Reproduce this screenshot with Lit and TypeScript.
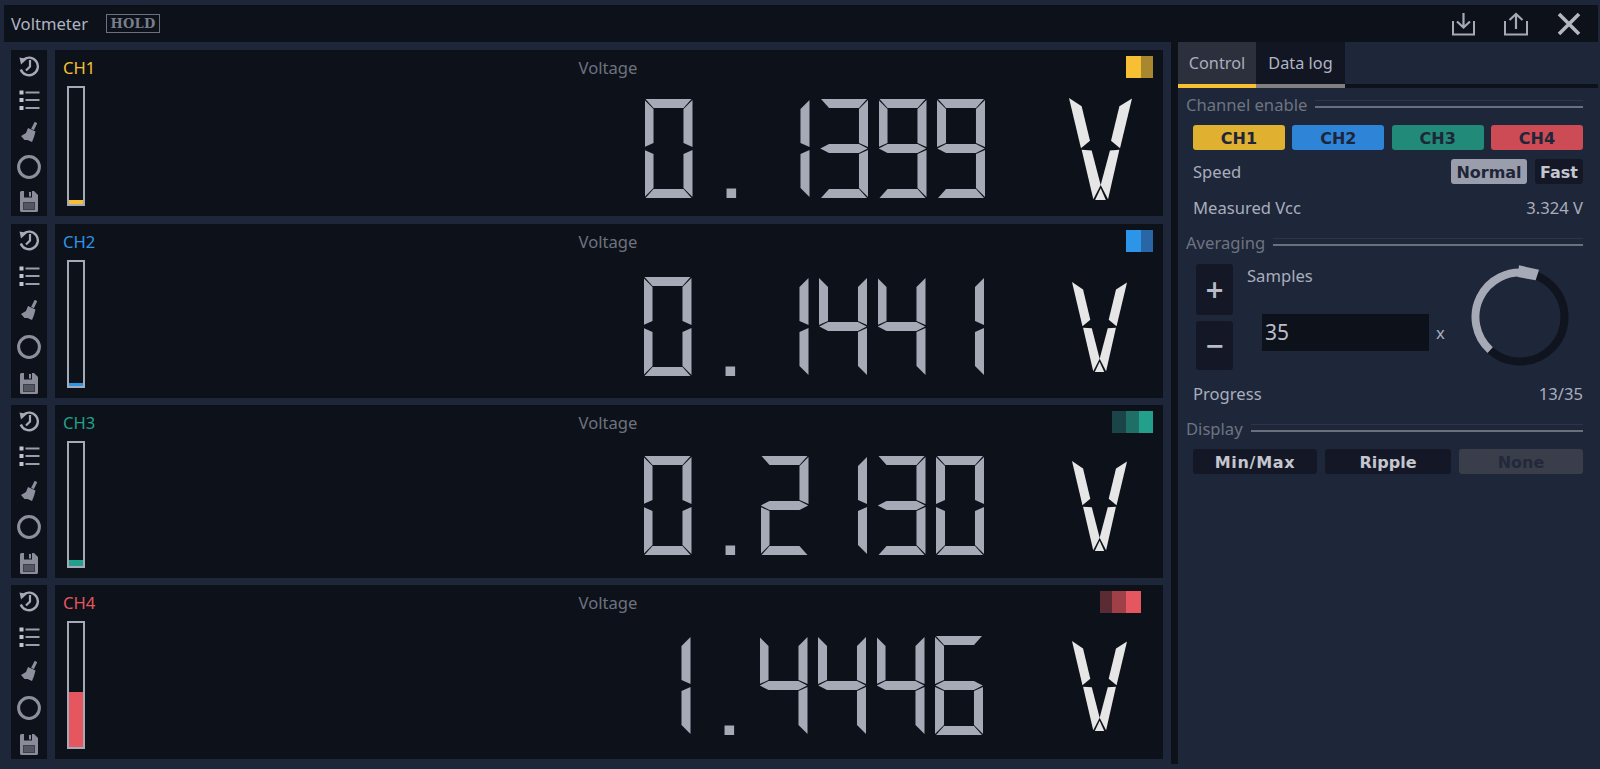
import { LitElement, html, css, svg } from "lit";
import { customElement } from "lit/decorators.js";

/* Seven-segment readout: every digit lights segments from its value; the value is exposed through aria-label. */
const SEGMENTS: Record<string, string[]> = {
  "0": ["a", "b", "c", "d", "e", "f"],
  "1": ["b", "c"],
  "2": ["a", "b", "g", "e", "d"],
  "3": ["a", "b", "g", "c", "d"],
  "4": ["f", "g", "b", "c"],
  "5": ["a", "f", "g", "c", "d"],
  "6": ["a", "f", "g", "e", "c", "d"],
  "7": ["a", "b", "c"],
  "8": ["a", "b", "c", "d", "e", "f", "g"],
  "9": ["a", "b", "c", "d", "f", "g"],
  ".": ["dp"],
};

interface Channel {
  name: string;
  value: string;
  color: string;
  level: number;
  swatches: [string, number][];
  digitTop: number;
  vGap: number;
  vRight: number;
  vTop: number;
  vClass: string;
}

const CHANNELS: Channel[] = [
  { name: "CH1", value: "0.1399", color: "#f7c034", level: 4, swatches: [["#f7c034", 15], ["#a8872e", 12]], digitTop: 13, vGap: 84, vRight: 31, vTop: -1, vClass: "v-large" },
  { name: "CH2", value: "0.1441", color: "#2d95e8", level: 3, swatches: [["#2d95e8", 15], ["#2866a5", 12]], digitTop: 17, vGap: 88, vRight: 36, vTop: 5, vClass: "v-small" },
  { name: "CH3", value: "0.2130", color: "#23a08b", level: 6, swatches: [["#1a4448", 14], ["#1f6f66", 13], ["#23a08b", 14]], digitTop: 15, vGap: 88, vRight: 36, vTop: 5, vClass: "v-small" },
  { name: "CH4", value: "1.4446", color: "#e5565f", level: 55, swatches: [["#5a2b33", 12], ["#9f4049", 14], ["#e5565f", 15], ["transparent", 12]], digitTop: 15, vGap: 89, vRight: 36, vTop: 5, vClass: "v-small" },
];

const historyIcon = svg`<svg class="ic" width="22" height="22" viewBox="0 0 22 22"><path d="M5 5A8.8 8.8 0 1 1 2.8 14.5" fill="none" stroke="currentColor" stroke-width="2.4"/><path d="M1.5 2.5L9 4 3 9.5Z" fill="currentColor"/><path d="M12 5V11.5L8 15.5" fill="none" stroke="currentColor" stroke-width="2.2"/></svg>`;
const listIcon = svg`<svg class="ic" width="21" height="20" viewBox="0 0 21 20"><g fill="#c2c4ce"><rect x="0.5" y="0.5" width="4" height="4"/><rect x="0.5" y="8" width="4" height="4"/><rect x="0.5" y="16" width="4" height="4"/></g><g fill="#9a9dab"><rect x="6.5" y="1.5" width="14" height="2"/><rect x="6.5" y="9" width="14" height="2"/><rect x="6.5" y="17" width="14" height="2"/></g></svg>`;
const brushIcon = svg`<svg class="ic" width="16" height="20" viewBox="0 0 16 20"><path d="M15 .5L11.5 7.5" stroke="#8d909c" stroke-width="3" fill="none"/><path d="M7 6L14.5 9.5 13 15 11 20 6.5 18 3.5 18 0 14 5 11Z" fill="#8d909c"/></svg>`;
const circleIcon = svg`<svg class="ic" width="24" height="24" viewBox="0 0 24 24"><circle cx="12" cy="12" r="10.4" fill="none" stroke="#8d909c" stroke-width="3"/></svg>`;
const saveIcon = svg`<svg class="ic" width="18" height="21" viewBox="0 0 18 21"><path d="M1.5 0H14L18 4V19.5A1.5 1.5 0 0 1 16.5 21H1.5A1.5 1.5 0 0 1 0 19.5V1.5A1.5 1.5 0 0 1 1.5 0Z" fill="#8a8d99"/><rect x="4" y="0" width="8" height="6.5" fill="#10141d"/><rect x="9" y="1" width="2" height="4.5" fill="#8a8d99"/><rect x="3" y="11" width="12" height="8" fill="#3d404a"/><path d="M4 13H14M4 15H14M4 17H14" stroke="#6c6f7a" stroke-width="1"/></svg>`;
const downloadIcon = svg`<svg width="23" height="24" viewBox="0 0 23 24"><path d="M1 9V22.5H22V9" fill="none" stroke="#a6a9b6" stroke-width="2"/><path d="M11.5 1V15.5M5 9.5L11.5 15.5 18 9.5" fill="none" stroke="#a6a9b6" stroke-width="2.2"/></svg>`;
const uploadIcon = svg`<svg width="24" height="24" viewBox="0 0 24 24"><path d="M1 9V22.5H23V9" fill="none" stroke="#a6a9b6" stroke-width="2"/><path d="M12 17V2M5.5 8L12 2 18.5 8" fill="none" stroke="#a6a9b6" stroke-width="2.2"/></svg>`;
const closeIcon = svg`<svg width="24" height="24" viewBox="0 0 24 24"><path d="M2 2L22 22M22 2L2 22" fill="none" stroke="#b4b7c2" stroke-width="3.6"/></svg>`;

@customElement("app-root")
export class AppRoot extends LitElement {
  static styles = css`
    :host {
      display: block;
      width: 1600px;
      height: 769px;
      overflow: hidden;
      box-sizing: border-box;
      background: #1e2639;
      padding: 5px 2px 2px 4px;
      font-family: "Noto Sans", "Open Sans", sans-serif;
      font-size: 16.6px;
      color: #a9aebd;
    }
    .top {
      height: 37px;
      background: #0d1119;
      display: flex;
      align-items: center;
      padding: 0 17px 0 7px;
    }
    .title { font-size: 16.6px; color: #b0b5c4; width: 95px; }
    .hold {
      box-sizing: border-box;
      width: 54px;
      height: 19px;
      margin-top: -1px;
      border: 1px solid #6c7080;
      color: #7a7e8c;
      font: bold 13px "DejaVu Serif", serif;
      letter-spacing: 0.3px;
      display: flex;
      align-items: center;
      justify-content: center;
    }
    .actions { margin-left: auto; display: flex; align-items: center; gap: 29px; }
    .actions svg { display: block; }
    .main { display: flex; height: 725px; }
    .left {
      display: flex;
      flex-direction: column;
      gap: 7px;
      padding: 8px 8px 0 7px;
      width: 1167px;
      box-sizing: border-box;
      flex: none;
    }
    .row { display: flex; gap: 8px; height: 174px; }
    .row:nth-child(1) { height: 166px; margin-bottom: 1px; }
    .row:nth-child(3) { height: 173px; }
    .tools {
      width: 36px;
      background: #0d1119;
      display: flex;
      flex-direction: column;
      align-items: center;
      justify-content: space-between;
      padding: 5px 0 4px;
      box-sizing: border-box;
      color: #a6a9b6;
    }
    .ic { display: block; }
    .panel {
      flex: 1;
      background: #0d1119;
      display: grid;
      grid-template-rows: 36px 1fr;
      grid-template-columns: 1fr;
    }
    .head {
      display: grid;
      grid-template-columns: 1fr auto 1fr;
      padding: 0 10px 0 8px;
    }
    .ch { line-height: 36px; }
    .voltage { line-height: 36px; color: #6e7280; }
    .swatches { display: flex; justify-content: flex-end; height: 22px; margin-top: 6px; }
    .body { display: flex; justify-content: space-between; min-height: 0; }
    .gauge { padding: 0 0 10px 12px; display: flex; }
    .bar {
      box-sizing: border-box;
      width: 18px;
      border: 2px solid #a6a9b6;
      display: flex;
      flex-direction: column;
      justify-content: flex-end;
    }
    .fill { width: 100%; }
    .readout { display: flex; align-items: flex-start; }
    .digits { display: flex; gap: 10.5px; }
    .digit { display: grid; width: 48px; height: 99px; }
    .seg { grid-area: 1 / 1; background: #a6a9b6; }
    .a { clip-path: polygon(2.1% 0, 97.9% 0, 81.2% 9.1%, 18.8% 9.1%); }
    .f { clip-path: polygon(0 1%, 18.8% 10.1%, 18.8% 44.4%, 0 48.5%); }
    .e { clip-path: polygon(0 51.5%, 18.8% 55.6%, 18.8% 89.9%, 0 99%); }
    .b { clip-path: polygon(100% 1%, 100% 48.5%, 81.2% 44.4%, 81.2% 10.1%); }
    .c { clip-path: polygon(100% 51.5%, 100% 99%, 81.2% 89.9%, 81.2% 55.6%); }
    .g { clip-path: polygon(0.5% 50%, 18.8% 45.5%, 81.2% 45.5%, 99.5% 50%, 81.2% 54.5%, 18.8% 54.5%); }
    .d { clip-path: polygon(18.8% 90.9%, 81.2% 90.9%, 97.9% 100%, 2.1% 100%); }
    .dp { clip-path: polygon(49% 90.5%, 69% 90.5%, 69% 100%, 49% 100%); }
    .unit { display: grid; }
    .v-large { width: 63px; height: 102px; }
    .v-small { width: 55px; height: 90px; }
    .vs { grid-area: 1 / 1; background: #e6e6e6; }
    .v1 { clip-path: polygon(0 0, 20.1% 8.2%, 33.3% 42%, 19% 49.2%); }
    .v2 { clip-path: polygon(100% 0.6%, 80% 8.2%, 66.7% 42%, 81% 49.2%); }
    .v3 { clip-path: polygon(20.1% 50.8%, 36% 51.5%, 50.3% 85.2%, 38.6% 99.3%); }
    .v4 { clip-path: polygon(79.9% 50.8%, 65% 51.5%, 50.3% 85.2%, 62% 99.3%); }
    .v5 { clip-path: polygon(50.3% 88.5%, 41.5% 100%, 58.5% 100%); }

    .strip { width: 7px; height: 722px; background: #0d1119; flex: none; }
    .side { flex: 1; display: flex; flex-direction: column; min-width: 0; }
    .tabs { display: flex; height: 42px; border-bottom: 4px solid #0d1119; flex: none; }
    .tab { line-height: 42px; text-align: center; color: #a9aebd; font-size: 16.3px; }
    .tab.on { width: 78px; background: #2c2f3c; box-shadow: 0 4px 0 #f7c034; }
    .tab.off { width: 89px; background: #121522; box-shadow: 0 4px 0 #808080; color: #b0b5c4; }
    .content { padding: 6px 15px 0 8px; }
    .legend { display: flex; align-items: center; height: 22px; color: #6e7480; gap: 8px; line-height: 22px; }
    .rule { flex: 1; height: 5px; margin-top: -3px; border-top: 1px solid #2f3546; border-bottom: 2px solid #6b6f7c; }
    .channels { display: flex; justify-content: space-between; margin: 9px 0 0 7px; }
    .btn {
      box-sizing: border-box;
      height: 25px;
      border-radius: 3px;
      font: bold 16px/27px "DejaVu Sans", sans-serif;
      text-align: center;
      color: #1e2639;
    }
    .channels .btn { width: 92px; }
    .line { display: flex; justify-content: space-between; align-items: center; margin-left: 7px; }
    .speed { height: 25px; margin-top: 9px; }
    .speed-btns { display: flex; gap: 8px; }
    .normal { width: 76px; background: #9a9dab; }
    .fast { width: 48px; background: #141826; color: #c4c6d0; }
    .vcc { height: 22px; margin-top: 12px; }
    .mt14 { margin-top: 14px; }
    .avg { display: flex; margin: 10px 0 0 10px; height: 106px; }
    .stepper { display: flex; flex-direction: column; gap: 6px; width: 37px; }
    .step {
      background: #141826;
      border-radius: 3px;
      color: #b9bcc8;
      font: bold 24px "DejaVu Sans", sans-serif;
      display: flex;
      align-items: center;
      justify-content: center;
    }
    .plus { height: 51px; }
    .minus { height: 49px; }
    .samples { width: 205px; margin-left: 14px; }
    .samples-label { line-height: 24px; height: 24px; }
    .input-row { display: flex; align-items: center; margin: 26px 0 0 15px; color: #a9aebd; gap: 7px; }
    .input {
      width: 167px;
      height: 37px;
      box-sizing: border-box;
      background: #0d1119;
      color: #b9bdcb;
      font-size: 21px;
      line-height: 37px;
      padding-left: 3px;
    }
    .ring { margin: 1px 0 0 16px; display: block; }
    .progress { height: 22px; margin-top: 12px; }
    .mt13 { margin-top: 14px; }
    .display { display: flex; justify-content: space-between; margin: 9px 0 0 7px; }
    .dk { background: #141826; color: #c4c6d0; }
    .minmax { width: 124px; letter-spacing: 0.7px; }
    .ripple { width: 126px; }
    .none { width: 124px; background: #3a3e4a; color: #23283b; }
  `;

  private digit(ch: string) {
    return html`<div class="digit">${(SEGMENTS[ch] ?? []).map((s) => html`<div class="seg ${s}"></div>`)}</div>`;
  }

  private channel(c: Channel) {
    return html`<div class="row">
      <div class="tools">${historyIcon}${listIcon}${brushIcon}${circleIcon}${saveIcon}</div>
      <div class="panel">
        <div class="head">
          <div class="ch" style="color:${c.color}">${c.name}</div>
          <div class="voltage">Voltage</div>
          <div class="swatches">${c.swatches.map(([s, w]) => html`<div style="background:${s};width:${w}px"></div>`)}</div>
        </div>
        <div class="body">
          <div class="gauge"><div class="bar"><div class="fill" style="height:${c.level}px;background:${c.color}"></div></div></div>
          <div class="readout" role="img" aria-label="${c.value} V" style="padding:${c.digitTop}px ${c.vRight}px 0 0">
            <div class="digits">${[...c.value].map((ch) => this.digit(ch))}</div>
            <div class="unit ${c.vClass}" style="margin:${c.vTop}px 0 0 ${c.vGap}px">
              <div class="vs v1"></div><div class="vs v2"></div><div class="vs v3"></div><div class="vs v4"></div><div class="vs v5"></div>
            </div>
          </div>
        </div>
      </div>
    </div>`;
  }

  render() {
    return html`
      <div class="top">
        <div class="title">Voltmeter</div>
        <div class="hold">HOLD</div>
        <div class="actions">${downloadIcon}${uploadIcon}${closeIcon}</div>
      </div>
      <div class="main">
        <div class="left">${CHANNELS.map((c) => this.channel(c))}</div>
        <div class="strip"></div>
        <div class="side">
          <div class="tabs"><div class="tab on">Control</div><div class="tab off">Data log</div></div>
          <div class="content">
            <div class="legend">Channel enable<div class="rule"></div></div>
            <div class="channels">
              <div class="btn" style="background:#e0b030">CH1</div>
              <div class="btn" style="background:#2e85d8">CH2</div>
              <div class="btn" style="background:#228a78">CH3</div>
              <div class="btn" style="background:#cc4b55">CH4</div>
            </div>
            <div class="line speed">
              <span>Speed</span>
              <div class="speed-btns"><div class="btn normal">Normal</div><div class="btn fast">Fast</div></div>
            </div>
            <div class="line vcc"><span>Measured Vcc</span><span>3.324 V</span></div>
            <div class="legend mt14">Averaging<div class="rule"></div></div>
            <div class="avg">
              <div class="stepper"><div class="step plus">+</div><div class="step minus">−</div></div>
              <div class="samples">
                <div class="samples-label">Samples</div>
                <div class="input-row"><div class="input">35</div><span>x</span></div>
              </div>
              <svg class="ring" width="104" height="104" viewBox="0 0 104 104">
                <circle cx="52" cy="52" r="44.5" fill="none" stroke="#10141e" stroke-width="8"></circle>
                <path d="M59.7 8.2A44.5 44.5 0 0 0 22.2 85.1" fill="none" stroke="#a6a9b6" stroke-width="8"></path>
                <polygon points="51,0.3 71,4.7 67.7,15.3 49.7,12" fill="#a6a9b6"></polygon>
              </svg>
            </div>
            <div class="line progress"><span>Progress</span><span>13/35</span></div>
            <div class="legend mt13">Display<div class="rule"></div></div>
            <div class="display">
              <div class="btn dk minmax">Min/Max</div>
              <div class="btn dk ripple">Ripple</div>
              <div class="btn none">None</div>
            </div>
          </div>
        </div>
      </div>
    `;
  }
}
